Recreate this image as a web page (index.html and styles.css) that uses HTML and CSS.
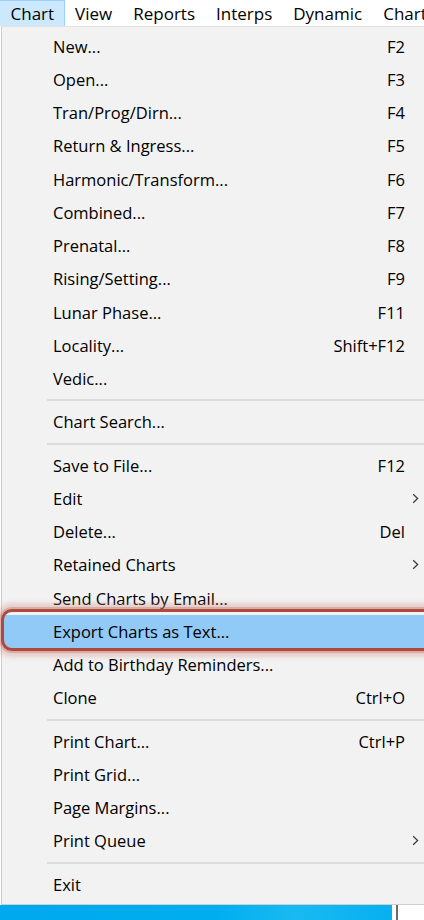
FILE: index.html
```html
<!DOCTYPE html>
<html>
<head>
<meta charset="utf-8">
<link rel="stylesheet" href="styles.css">
</head>
<body>
<div class="menubar">
  <div class="mb-item active">Chart</div>
  <div class="mb-item">View</div>
  <div class="mb-item">Reports</div>
  <div class="mb-item">Interps</div>
  <div class="mb-item">Dynamic</div>
  <div class="mb-item">Chart</div>
</div>
<div class="dropdown">
  <div class="item"><span class="label">New...</span><span class="key">F2</span><span class="sub"></span></div>
  <div class="item"><span class="label">Open...</span><span class="key">F3</span><span class="sub"></span></div>
  <div class="item"><span class="label">Tran/Prog/Dirn...</span><span class="key">F4</span><span class="sub"></span></div>
  <div class="item"><span class="label">Return &amp; Ingress...</span><span class="key">F5</span><span class="sub"></span></div>
  <div class="item"><span class="label">Harmonic/Transform...</span><span class="key">F6</span><span class="sub"></span></div>
  <div class="item"><span class="label">Combined...</span><span class="key">F7</span><span class="sub"></span></div>
  <div class="item"><span class="label">Prenatal...</span><span class="key">F8</span><span class="sub"></span></div>
  <div class="item"><span class="label">Rising/Setting...</span><span class="key">F9</span><span class="sub"></span></div>
  <div class="item"><span class="label">Lunar Phase...</span><span class="key">F11</span><span class="sub"></span></div>
  <div class="item"><span class="label">Locality...</span><span class="key">Shift+F12</span><span class="sub"></span></div>
  <div class="item"><span class="label">Vedic...</span><span class="key"></span><span class="sub"></span></div>
  <div class="sep"></div>
  <div class="item"><span class="label">Chart Search...</span><span class="key"></span><span class="sub"></span></div>
  <div class="sep"></div>
  <div class="item"><span class="label">Save to File...</span><span class="key">F12</span><span class="sub"></span></div>
  <div class="item"><span class="label">Edit</span><span class="key"></span><span class="sub"><svg width="7" height="11" viewBox="0 0 7 11"><polyline points="1.2,1.2 5.6,5.5 1.2,9.8" fill="none" stroke="#3c3c3c" stroke-width="1.3"/></svg></span></div>
  <div class="item"><span class="label">Delete...</span><span class="key">Del</span><span class="sub"></span></div>
  <div class="item"><span class="label">Retained Charts</span><span class="key"></span><span class="sub"><svg width="7" height="11" viewBox="0 0 7 11"><polyline points="1.2,1.2 5.6,5.5 1.2,9.8" fill="none" stroke="#3c3c3c" stroke-width="1.3"/></svg></span></div>
  <div class="item"><span class="label">Send Charts by Email...</span><span class="key"></span><span class="sub"></span></div>
  <div class="item hl"><span class="label">Export Charts as Text...</span><span class="key"></span><span class="sub"></span></div>
  <div class="item"><span class="label">Add to Birthday Reminders...</span><span class="key"></span><span class="sub"></span></div>
  <div class="item"><span class="label">Clone</span><span class="key">Ctrl+O</span><span class="sub"></span></div>
  <div class="sep"></div>
  <div class="item"><span class="label">Print Chart...</span><span class="key">Ctrl+P</span><span class="sub"></span></div>
  <div class="item"><span class="label">Print Grid...</span><span class="key"></span><span class="sub"></span></div>
  <div class="item"><span class="label">Page Margins...</span><span class="key"></span><span class="sub"></span></div>
  <div class="item"><span class="label">Print Queue</span><span class="key"></span><span class="sub"><svg width="7" height="11" viewBox="0 0 7 11"><polyline points="1.2,1.2 5.6,5.5 1.2,9.8" fill="none" stroke="#3c3c3c" stroke-width="1.3"/></svg></span></div>
  <div class="sep"></div>
  <div class="item"><span class="label">Exit</span><span class="key"></span><span class="sub"></span></div>
  <div class="annot"></div>
</div>
<div class="bottom">
  <div class="desk"></div>
  <div class="gap"></div>
  <div class="vline"></div>
  <div class="white"></div>
</div>
</body>
</html>
```

FILE: styles.css
```css
html, body {
  margin: 0;
  padding: 0;
}
body {
  width: 424px;
  height: 920px;
  overflow: hidden;
  background: #ffffff;
  font-family: "Open Sans", "Noto Sans", "Liberation Sans", sans-serif;
  font-size: 16.5px;
  color: #000;
}
.menubar {
  height: 26px;
  display: flex;
  background: #ffffff;
  white-space: nowrap;
  overflow: hidden;
  font-size: 17px;
}
.mb-item {
  height: 26px;
  line-height: 27px;
  padding: 0 10.5px;
  box-sizing: border-box;
  flex: none;
}
.mb-item.active {
  background: #cce8ff;
  border: 1px solid #99d1ff;
  border-bottom: none;
  border-left: none;
  padding: 0 9.5px 0 10.5px;
  line-height: 26px;
}
.dropdown {
  position: relative;
  background: #f2f2f2;
  border-left: 1px solid #cccccc;
  border-top: 1px solid #e2e2e2;
  border-bottom: 1px solid #cfcfcf;
  margin-left: 1px;
  padding: 2.5px 0 3px;
}
.item {
  height: 33.25px;
  display: grid;
  grid-template-columns: 1fr auto 19px;
  align-items: center;
  padding-left: 51px;
  white-space: nowrap;
}
.item .key {
  text-align: right;
}
.item .sub {
  display: flex;
  justify-content: center;
  align-items: center;
  padding-left: 2px;
}
.item .sub svg {
  display: block;
}
.item.hl {
  background: #91c9f7;
  margin-left: 2px;
  padding-left: 49px;
}
.sep {
  height: 10px;
  display: flex;
  align-items: center;
  padding-left: 45px;
}
.sep::after {
  content: "";
  display: block;
  flex: 1;
  height: 2px;
  background: #dcdcdc;
}
.annot {
  position: absolute;
  top: 581.5px;
  left: -1px;
  right: 0;
  height: 42px;
  box-sizing: border-box;
  border: 3.5px solid #b0483b;
  border-right: none;
  border-radius: 11px 0 0 11px;
  box-shadow: 0 0 0 2px rgba(190, 110, 100, 0.35), 0 0 4px 6px rgba(205, 140, 130, 0.35);
}
.bottom {
  height: 16px;
  display: flex;
}
.desk {
  width: 392px;
  background: linear-gradient(90deg, #00a8ee 0%, #00aeef 55%, #19baf2 75%, #07b0f0 100%);
}
.gap {
  width: 4px;
  background: #ffffff;
}
.vline {
  width: 2px;
  background: #6b6b6b;
}
.white {
  flex: 1;
  background: #ffffff;
}
```
